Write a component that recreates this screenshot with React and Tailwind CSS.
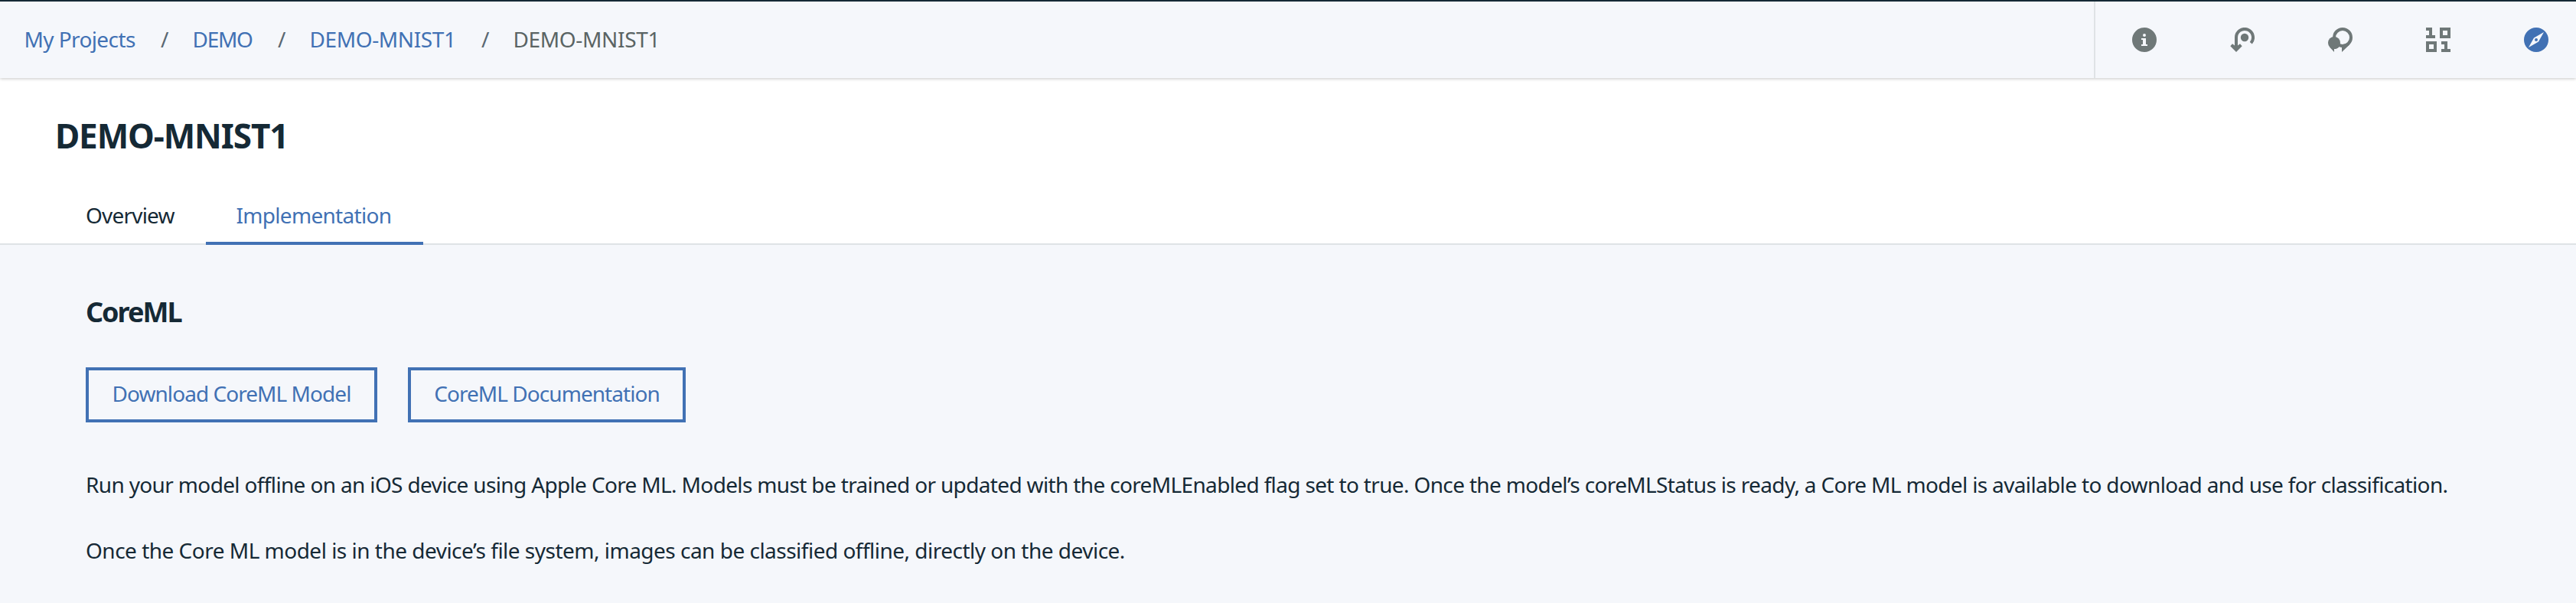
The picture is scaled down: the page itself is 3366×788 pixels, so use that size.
const Icon = ({ children, className = "text-[#6f7878]" }) => (
  <button className="flex h-full w-32 shrink-0 items-center justify-center">
    <svg viewBox="0 0 32 32" className={`h-8 w-8 ${className}`} fill="currentColor">{children}</svg>
  </button>
);

const Slash = () => <span className="w-[41.5px] text-[#5a6872]">/</span>;

export default function App() {
  return (
    <div className="flex h-[788px] w-[3366px] flex-col overflow-hidden whitespace-nowrap bg-[#f5f7fb] font-['Noto_Sans',sans-serif] text-[28px] leading-[40px] text-[#152935]">
      <header className="relative z-10 flex h-[100px] shrink-0 justify-between border-t-2 border-[#152935] bg-[#f5f7fb] box-content shadow-[0_1px_4px_rgba(0,0,0,0.22)]">
        <nav className="flex items-center pb-0.5 pl-[31.5px] text-[#4171b4]">
          <span className="w-[178.5px] tracking-[-0.6px]">My Projects</span>
          <Slash />
          <span className="w-[111.5px] tracking-[-1.3px]">DEMO</span>
          <Slash />
          <span className="w-[224.5px] tracking-[-0.4px]">DEMO-MNIST1</span>
          <Slash />
          <span className="tracking-[-0.35px] text-[#5a6464]">DEMO-MNIST1</span>
        </nav>
        <div className="flex w-[630px] overflow-hidden border-l-2 border-[#dfe3e6]">
          <Icon>
            <path fillRule="evenodd" d="M16 0a16 16 0 1 0 0 32a16 16 0 0 0 0-32ZM16 8a2 2 0 1 1 0 4a2 2 0 0 1 0-4ZM12 14h6v8h2v2h-8v-2h2v-6h-2Z" />
          </Icon>
          <Icon>
            <circle cx="19" cy="13" r="5.200" />
            <path d="M8 28V13a11 11 0 1 1 19.300 7.200" fill="none" stroke="currentColor" strokeWidth="4" />
            <path d="M8 32L0.300 24.300L3 21.200L6 23.500H10L13 21.200L15.700 24.300Z" />
          </Icon>
          <Icon>
            <circle cx="19" cy="13" r="11" fill="none" stroke="currentColor" strokeWidth="4" />
            <circle cx="8" cy="20" r="8" />
            <path d="M2.300 25.700L8 32V28C11 28 13.500 26.700 15 24.600L18 25.800V32L28.200 22.200L24 21Z" />
          </Icon>
          <Icon>
            <path fillRule="evenodd" d="M0 0h8v10h4v4H0v-4h4V4H0ZM18 0h14v14H18ZM22 4v6h6V4ZM0 18h14v14H0ZM4 22v6h6v-6ZM20 18h8v10h4v4H20v-4h4v-6h-4Z" />
          </Icon>
          <Icon className="text-[#4171b4]">
            <path fillRule="evenodd" d="M16 0a16 16 0 1 0 0 32a16 16 0 0 0 0-32ZM26 6L19 18.500L6 26L13 13.500ZM16 14a2 2 0 1 0 0 4a2 2 0 0 0 0-4Z" />
          </Icon>
        </div>
      </header>

      <section className="flex h-[218px] shrink-0 flex-col justify-between border-b-2 border-[#dfe3e6] bg-white">
        <h1 className="pl-[72px] pt-[47px] text-[44px] font-bold leading-[56px] tracking-[-1.1px]">DEMO-MNIST1</h1>
        <div className="-mb-0.5 flex pl-[72px]">
          <div className="w-[197px] pb-[15px] pl-10 tracking-[-0.8px]">Overview</div>
          <div className="w-[284px] border-b-4 border-[#4171b4] pb-[15px] pl-[39.5px] tracking-[-0.7px] text-[#4171b4]">Implementation</div>
        </div>
      </section>

      <main className="flex flex-col items-start pl-[112px] pt-[64px]">
        <h2 className="text-[36px] font-bold leading-[48px] tracking-[-2px]">CoreML</h2>
        <div className="mt-12 flex gap-10 tracking-[-0.95px] text-[#4171b4]">
          <button className="flex h-[72px] w-[381px] items-center justify-center border-4 border-[#4171b4] pb-1">Download CoreML Model</button>
          <button className="flex h-[72px] w-[363px] items-center justify-center border-4 border-[#4171b4] pb-1">CoreML Documentation</button>
        </div>
        <p className="mt-[61px] tracking-[-0.65px]">Run your model offline on an iOS device using Apple Core ML. Models must be trained or updated with the coreMLEnabled flag set to true. Once the model’s coreMLStatus is ready, a Core ML model is available to download and use for classification.</p>
        <p className="mt-[46px] tracking-[-0.51px]">Once the Core ML model is in the device’s file system, images can be classified offline, directly on the device.</p>
      </main>
    </div>
  );
}
